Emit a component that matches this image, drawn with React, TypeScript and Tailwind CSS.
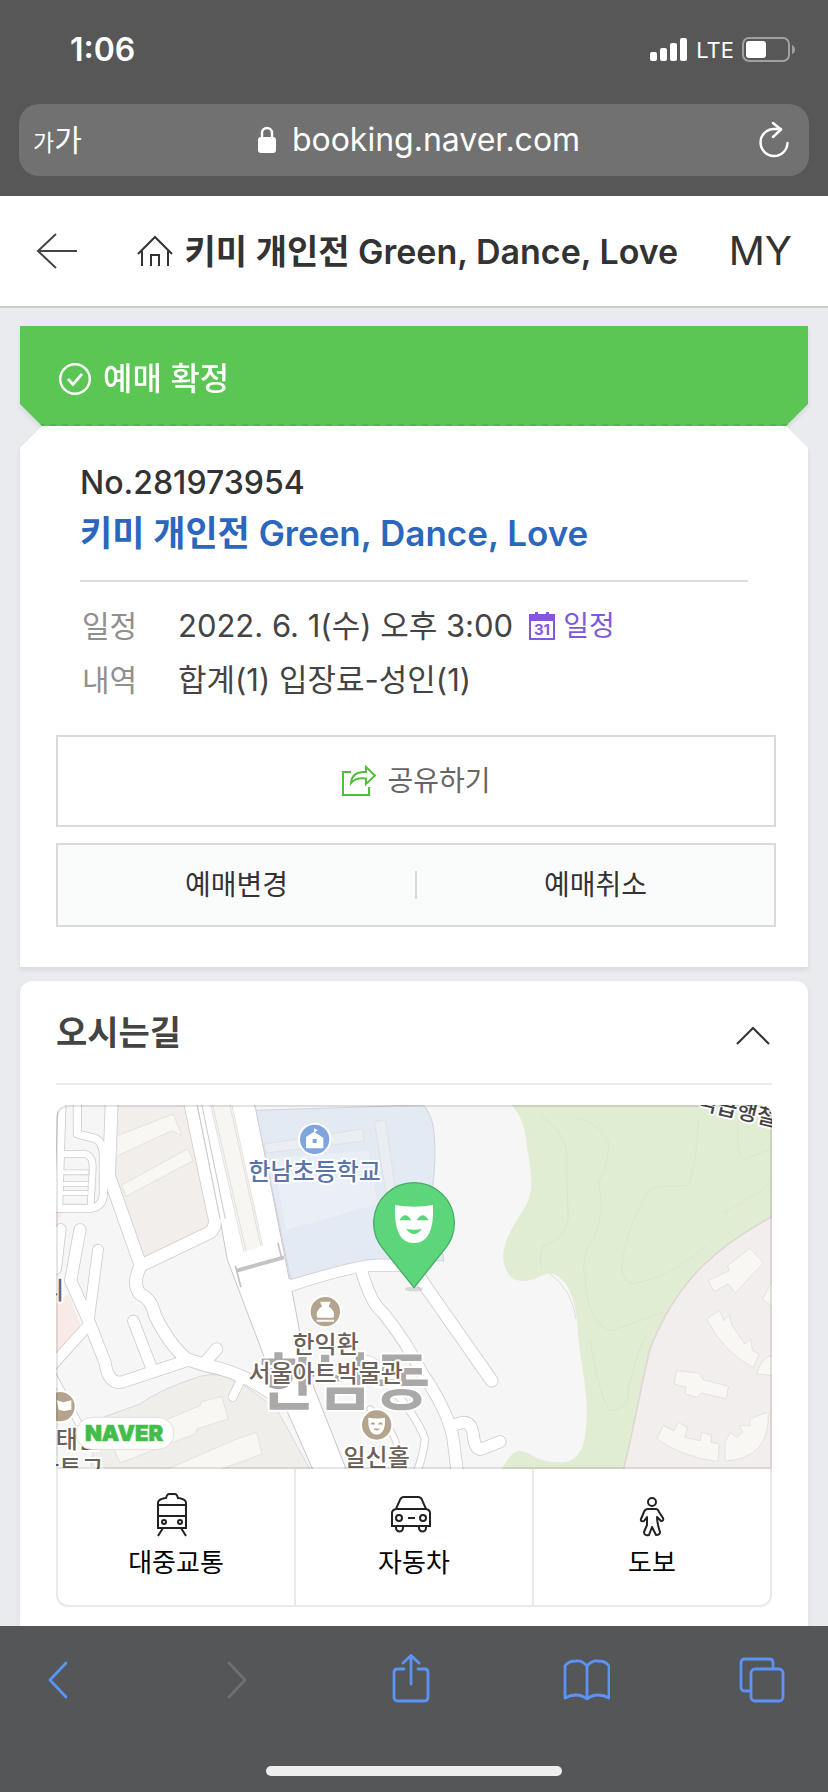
import type { ReactNode } from "react";

const roads = [
  { d: "M66 40 L56 350", w: 22 },
  { d: "M112 40 V135 L165 148 Q190 160 190 200 V320 Q185 355 150 358 H48", w: 22 },
  { d: "M70 195 H135 Q160 200 158 240 L152 350", w: 18 },
  { d: "M70 250 H140 M70 285 H140 M70 312 H140", w: 12 },
  { d: "M215 40 L207 260 L302 530 Q275 585 300 615 Q335 630 345 680 Q390 770 440 810 L500 830 Q600 845 720 930", w: 36 },
  { d: "M450 40 L525 395 Q525 425 500 435 L302 530", w: 36 },
  { d: "M62 420 L48 540", w: 30 },
  { d: "M120 422 L92 575 L148 700 L195 820 Q205 890 250 878 L440 815", w: 34 },
  { d: "M174 482 L144 710 L40 825", w: 30 },
  { d: "M280 696 L336 840", w: 32 },
  { d: "M530 780 L490 826", w: 34 },
  { d: "M606 866 L578 924", w: 24 },
  { d: "M40 860 L120 1010", w: 18 },
  { d: "M740 592 Q940 524 1010 528 H1090 Q1135 550 1155 590 L1355 875", w: 36 },
  { d: "M962 535 Q990 640 1028 670 Q1100 760 1145 850 Q1220 960 1238 1040 L1252 1150", w: 34 },
  { d: "M1232 1010 L1270 1000 Q1295 1000 1300 1040 Q1305 1085 1325 1080 L1380 1058", w: 34 },
  { d: "M960 810 Q1010 800 1040 880 Q1130 980 1155 1050 Q1150 1100 1130 1150", w: 20 },
  { d: "M990 960 Q1080 1020 1085 1150", w: 16 },
];

const buildings = [
  "M232 140 L400 75 L425 140 L395 125 L230 202Z",
  "M245 288 L443 180 L460 215 L258 322Z",
  "M214 1060 L480 950 L485 938 L545 922 L565 990 L470 1020 L465 1035 L240 1122Z",
  "M360 1150 L590 1050 L650 1030 L666 1095 L520 1150Z",
  "M2005 575 L2068 545 L2062 530 L2130 478 L2170 522 L2085 612 L2065 585 L2022 608Z",
  "M2000 690 L2038 664 L2052 695 L2068 678 L2076 710 L2115 765 L2132 750 L2138 785 L2158 795 L2140 836 Q2050 790 2000 690Z",
  "M2150 855 Q2165 800 2200 800 V860Z",
  "M2205 560 L2168 630 L2205 660Z",
  "M1910 845 L1978 852 L1990 872 L2066 892 L2058 930 L1985 912 L1970 925 L1935 915 L1938 895 L1902 885Z",
  "M1870 1010 L1902 1025 L1915 1000 L1942 1015 L1935 1045 L1980 1055 L1985 1030 L2015 1038 L2012 1060 L2038 1065 L2034 1118 Q1930 1105 1850 1050Z",
  "M2185 970 Q2190 1110 2055 1116 L2055 1060 L2070 1030 L2090 1045 L2108 1030 L2098 1010 L2130 1010 V988Z",
];

function Mask({ x, y, scale, hole }: { x: number; y: number; scale: number; hole: string }) {
  return (
    <g transform={`translate(${x} ${y}) scale(${scale})`}>
      <path d="M-57 -54 Q0 -44 57 -54 Q62 60 0 60 Q-62 60 -57 -54Z" fill="#fff" />
      <path d="M-44 -8 Q-26 -38 -8 -8Z M8 -8 Q26 -38 44 -8Z M-24 18 Q0 22 24 18 Q0 48 -24 18Z" fill={hole} />
    </g>
  );
}

function MapView() {
  return (
    <svg
      viewBox="48 48 2148 1092"
      preserveAspectRatio="xMidYMid slice"
      className="block h-[364px] w-full rounded-t-xl font-['Noto_Sans_CJK_KR',sans-serif]"
      role="img"
      aria-label="지도"
    >
      <rect x="0" y="0" width="2300" height="1200" fill="#f6f6f6" />
      <path d="M228 40 H432 L508 410 L315 505 L226 280Z" fill="#f1eeec" />
      <path d="M150 1150 L175 990 L300 945 Q360 900 480 862 Q540 845 600 880 L710 960 L815 1150Z" fill="#f0eeeb" stroke="#ddd9d5" strokeWidth="3" />
      <path d="M40 650 L85 615 L125 715 L40 795Z M40 368 H68 L50 405Z" fill="#f8ebe5" />
      <path d="M1415 48 C1450 90 1455 120 1465 200 C1480 280 1475 320 1455 355 C1420 410 1385 460 1390 515 C1400 560 1420 580 1460 575 C1500 570 1510 550 1540 555 C1590 575 1605 640 1612 700 C1615 800 1640 880 1640 960 C1640 1050 1630 1105 1580 1118 C1530 1125 1490 1110 1470 1095 C1430 1075 1415 1085 1380 1150 H2210 V40Z" fill="#e1edd2" />
      <path d="M1530 555 Q1595 600 1608 690" fill="none" stroke="#d2cdcd" strokeWidth="2" />
      <g fill="none" stroke="#dae6cc" strokeWidth="3">
        <path d="M1500 80 Q1580 130 1580 200 T1585 390 Q1570 460 1510 470 Q1495 500 1505 535" />
        <path d="M1600 85 Q1660 90 1705 155 Q1710 220 1675 280 Q1700 370 1660 450 Q1620 500 1635 560 Q1640 700 1710 725 Q1760 710 1870 670" />
        <path d="M1975 90 Q1970 220 1945 290 Q1840 290 1825 305 Q1780 380 1765 440 Q1720 570 1780 585 Q1900 560 2000 470" />
        <path d="M1650 750 Q1680 930 1710 965 Q1770 960 1765 900 Q1790 800 1815 740" />
        <path d="M2095 100 Q2085 210 2120 210 L2196 178 M2050 370 Q2130 330 2196 280" />
      </g>
      <path d="M2210 375 C2040 465 1910 570 1830 780 C1800 900 1780 1030 1748 1150 H2210Z" fill="#f1eeed" stroke="#dfd8d2" strokeWidth="5" />

      {/* casings first, so that junctions stay open */}
      <g fill="none" strokeLinecap="round" strokeLinejoin="round">
        {roads.map((r) => (
          <path key={r.d} d={r.d} stroke="#cfcdcd" strokeWidth={r.w + 5} />
        ))}
      </g>
      <path d="M470 40 L540 390 L562 512 L690 850 L822 1150 H922 L800 840 L756 605 L748 572 L648 62 L640 40Z" fill="#fff" stroke="#c9c6c6" strokeWidth="3" />
      <g fill="none" stroke="#fff" strokeLinecap="round" strokeLinejoin="round">
        {roads.map((r) => (
          <path key={r.d} d={r.d} strokeWidth={r.w} />
        ))}
      </g>
      <path d="M470 40 L540 390 M484 40 L556 390" fill="none" stroke="#cbc8c8" strokeWidth="3" />
      <path d="M510 40 H572 L668 470 L612 490Z" fill="#f7f6f3" />
      <path d="M510 40 L612 490 M516 40 L618 485 M568 40 L662 470 M574 40 L668 470" fill="none" stroke="#d8d3d0" strokeWidth="2" />
      <g fill="#f8f7f4" stroke="#e6e2dd" strokeWidth="3">
        {buildings.map((d) => (
          <path key={d} d={d} />
        ))}
      </g>
      <path d="M590 545 L732 505" stroke="#c5c2c4" strokeWidth="12" />
      <path d="M714 462 L726 512 M586 530 L603 595" stroke="#c5c2c4" strokeWidth="5" />

      <path d="M648 64 L1150 48 Q1178 80 1182 130 Q1190 210 1176 310 L1212 516 L1090 510 H1010 Q950 512 752 572Z" fill="#e4eaf3" stroke="#cfd2dc" strokeWidth="3" />
      <path d="M672 165 L968 120 L974 156 L680 192Z M1003 98 L1036 92 L1066 300 L1110 296 V322 L1040 326Z" fill="#eaeef2" stroke="#dde2e6" strokeWidth="3" />
      <path d="M700 206 L985 186 L1012 345 L738 424Z" fill="#e9eff5" />

      <g strokeLinejoin="round" stroke="#fff" strokeWidth="12" paintOrder="stroke" fontWeight="500" fontSize="72" textAnchor="middle">
        <text x="914" y="948" fontSize="186" fontWeight="700" fill="#aaa9a8">한남동</text>
        <circle cx="824" cy="151" r="44" fill="#7fa4de" />
        <text x="824" y="274" fill="#5975a8">한남초등학교</text>
        <circle cx="856" cy="668" r="44" fill="#b5a48d" />
        <text x="857" y="792" fill="#6c6258">한익환</text>
        <text x="857" y="880" fill="#6c6258">서울아트박물관</text>
        <circle cx="1010" cy="1008" r="44" fill="#b5a48d" />
        <text x="1010" y="1132" fill="#6c6258">일신홀</text>
        <circle cx="60" cy="953" r="44" fill="#b5a48d" />
        <text x="80" y="1078" fill="#6c6258">이태원</text>
        <text x="58" y="1166" fill="#6c6258">관광특구</text>
        <text x="39" y="630" fill="#5b6784">리</text>
        <text fontSize="66" fill="#444" textAnchor="start" transform="translate(1968 58) rotate(13)">역급행철도</text>
      </g>
      <path d="M798 178 V144 L822 128 V118 L834 124 L824 130 L850 146 V178Z" fill="#fff" />
      <rect x="818" y="150" width="12" height="12" fill="#7fa4de" />
      <path d="M840 638 H872 L866 652 Q888 668 880 686 H832 Q824 668 846 652Z M830 692 H882 V698 H830Z" fill="#fff" />
      <Mask x={1010} y={1010} scale={0.44} hole="#b5a48d" />
      <path d="M50 934 L70 940 L94 934 V962 L72 966 L56 962 L60 984" fill="#fff" />

      <rect x="108" y="985" width="294" height="96" rx="48" fill="#fff" stroke="#e2dfdd" strokeWidth="3" />
      <text x="252" y="1056" textAnchor="middle" fill="#43bd49" stroke="#43bd49" strokeWidth="2" fontSize="66" className="font-['Inter',sans-serif] font-black">NAVER</text>

      <ellipse cx="1122" cy="600" rx="28" ry="7" fill="#9aa39c" opacity=".35" />
      <path d="M1122 596 L1028 478 A121 121 0 1 1 1216 478Z" fill="#5dd67b" stroke="#44ad68" strokeWidth="4" />
      <Mask x={1122} y={402} scale={1} hole="#5dd67b" />

      <path d="M51 1137 V90 Q51 51 90 51 H2154 Q2193 51 2193 90 V1137Z" fill="none" stroke="#000" strokeOpacity=".1" strokeWidth="6" />
    </svg>
  );
}

function Way({ label, icon, className = "" }: { label: string; icon: ReactNode; className?: string }) {
  return (
    <button type="button" className={`flex flex-1 flex-col items-center pt-6 text-[26px] leading-9 text-black ${className}`}>
      {icon}
      <span className="mt-2">{label}</span>
    </button>
  );
}

function Row({ label, children }: { label: string; children: ReactNode }) {
  return (
    <div className="flex items-center">
      <dt className="w-24 text-[30px] text-[#8f8f8f]">{label}</dt>
      <dd className="flex items-center">{children}</dd>
    </div>
  );
}

export default function App() {
  return (
    <div className="flex min-h-screen flex-col bg-[#e9ebef] font-['Inter','Noto_Sans_CJK_KR',sans-serif] text-[#333]">
      <div className="bg-[#575757] pb-5 text-white">
        <div className="flex h-[104px] items-center justify-between pr-8 pb-1 pl-[70px]">
          <span className="text-[32px] font-semibold">1:06</span>
          <div className="flex items-center gap-2">
            <svg width="38" height="24" viewBox="0 0 38 24" fill="#fff">
              <rect y="14" width="7" height="9" rx="2" />
              <rect x="10" y="10" width="7" height="13" rx="2" />
              <rect x="20" y="5" width="7" height="18" rx="2" />
              <rect x="30" width="7" height="23" rx="2" />
            </svg>
            <span className="text-[22px]">LTE</span>
            <svg width="54" height="26" viewBox="0 0 54 26">
              <rect x="1" y="1" width="46" height="23" rx="6" fill="none" stroke="#a0a0a0" strokeWidth="2" />
              <rect x="4" y="4" width="20" height="17" rx="3" fill="#fff" />
              <path d="M50 8 Q53 9 53 12.5 T50 17Z" fill="#a0a0a0" />
            </svg>
          </div>
        </div>
        <div className="mx-[19px] flex h-[72px] items-center justify-between rounded-[20px] bg-[#717171] pr-5 pl-[14px]">
          <button type="button" aria-label="글자 크기" className="flex w-20 items-baseline">
            <span className="text-[23px]">가</span>
            <span className="text-[30px]">가</span>
          </button>
          <div className="flex items-center gap-4">
            <svg width="18" height="28" viewBox="0 0 18 28">
              <rect y="11" width="18" height="16" rx="3" fill="#fff" />
              <path d="M4 12 V7 a5 5 0 0 1 10 0 V12" fill="none" stroke="#fff" strokeWidth="2.4" />
            </svg>
            <span className="text-[32px]">booking.naver.com</span>
          </div>
          <button type="button" aria-label="새로고침" className="flex w-16 justify-end">
            <svg width="30" height="38" viewBox="0 0 30 38" fill="none" stroke="#fff" strokeWidth="2.4" strokeLinecap="round" strokeLinejoin="round">
              <path d="M28.5 22 A13.5 13.5 0 1 1 15 8 H22 M14 2 L22 8.5 L14 16" />
            </svg>
          </button>
        </div>
      </div>

      <header className="flex h-28 items-center justify-between border-b-2 border-[#cdced2] bg-white pr-9 pl-9">
        <button type="button" aria-label="뒤로">
          <svg width="42" height="36" viewBox="0 0 42 36" fill="none" stroke="#444" strokeWidth="2">
            <path d="M20 1 L2 18 L20 35 M2 18 H41" />
          </svg>
        </button>
        <div className="ml-2 flex items-center gap-3">
          <svg width="36" height="32" viewBox="0 0 36 32" fill="none" stroke="#333" strokeWidth="2">
            <path d="M1 19 L18 2 L35 19 M5 16 V31 M31 16 V31 M14 31 V20 H22 V31" />
          </svg>
          <h1 className="text-[34px] font-semibold whitespace-nowrap">키미 개인전 Green, Dance, Love</h1>
        </div>
        <a href="#my" className="text-[40px]">MY</a>
      </header>

      <main className="flex flex-1 flex-col px-5 pt-[18px]">
        <section className="drop-shadow-[0_3px_2px_rgba(0,0,0,0.08)]">
          <div className="flex h-[100px] flex-col bg-[#5bc653] text-white [clip-path:polygon(0_0,100%_0,100%_calc(100%-22px),calc(100%-22px)_100%,22px_100%,0_calc(100%-22px))]">
            <div className="flex flex-1 items-center gap-3 px-[39px] pt-2">
              <svg width="32" height="32" viewBox="0 0 32 32" fill="none" stroke="#fff">
                <circle cx="16" cy="16" r="14.8" strokeWidth="2.4" />
                <path d="M9 16 L14 21.5 L23 11" strokeWidth="2.8" />
              </svg>
              <strong className="text-[32px] font-medium">예매 확정</strong>
            </div>
            <div className="h-0.5 bg-[repeating-linear-gradient(90deg,transparent_0_6px,#52b34b_6px_12px)]" />
          </div>
          <div className="bg-white pt-[34px] pr-8 pb-10 pl-9 [clip-path:polygon(22px_0,calc(100%-22px)_0,100%_22px,100%_100%,0_100%,0_22px)]">
            <div className="mr-7 ml-6 border-b-2 border-[#dedede] pb-5">
              <p className="text-[32px] leading-[46px] font-medium">No.281973954</p>
              <h2 className="text-[35px] leading-[54px] font-semibold text-[#2b67bd]">키미 개인전 Green, Dance, Love</h2>
            </div>
            <dl className="mt-[17px] ml-[26px] text-[31px] leading-[54px] text-[#444]">
              <Row label="일정">
                2022. 6. 1(수) 오후 3:00
                <a href="#calendar" className="ml-4 flex items-center gap-2 text-[28px] text-[#7b5bdc]">
                  <svg width="26" height="28" viewBox="0 0 26 28">
                    <path d="M0 2 H6 V0 H9 V2 H17 V0 H20 V2 H26 V28 H0Z M2 9 V26 H24 V9Z" fill="#8557de" fillRule="evenodd" />
                    <text x="13" y="23" textAnchor="middle" fontSize="15" fontWeight="700" fill="#8557de">31</text>
                  </svg>
                  일정
                </a>
              </Row>
              <Row label="내역">합계(1) 입장료-성인(1)</Row>
            </dl>
            <button type="button" className="mt-7 flex h-[92px] w-full items-center justify-center gap-2.5 border-2 border-[#d9dbdb] text-[28px] text-[#666]">
              <svg width="36" height="32" viewBox="0 0 36 32" fill="none" stroke="#53bd3e" strokeWidth="2">
                <path d="M10 7 H2 V30 H28 V22" />
                <path d="M10 18 Q11 6 25 7 V2 L34 10.500 L25 19 V13.500 Q15 12 10 18Z" />
              </svg>
              공유하기
            </button>
            <div className="mt-4 flex h-[84px] items-center border-2 border-[#d9dbdb] bg-[#fafcfb] text-[28px]">
              <button type="button" className="flex-1">예매변경</button>
              <span className="h-7 w-0.5 bg-[#d9dbdb]" />
              <button type="button" className="flex-1">예매취소</button>
            </div>
          </div>
        </section>

        <section className="mt-[14px] flex-1 rounded-t-xl bg-white px-9 pb-[18px] shadow-[0_2px_6px_rgba(0,0,0,0.06)]">
          <div className="flex h-[104px] items-center justify-between border-b-2 border-[#ebebeb]">
            <h2 className="text-[34px] font-bold text-[#444]">오시는길</h2>
            <button type="button" aria-label="접기">
              <svg width="36" height="26" viewBox="0 0 36 26" fill="none" stroke="#333" strokeWidth="2">
                <path d="M1 25 L17 9 L33 25" />
              </svg>
            </button>
          </div>
          <div className="mt-5">
            <MapView />
            <div className="flex h-[138px] rounded-b-xl border-x-2 border-b-2 border-[#e9e9e9]">
              <Way
                label="대중교통"
                icon={
                  <svg width="38" height="44" viewBox="0 0 38 44" fill="none" stroke="#222" strokeWidth="2">
                    <path d="M1 35 V10 Q1 6 9 5 Q10 1 12 1 H18 Q20 1 21 5 Q29 6 29 10 V35Z M1 12 H29 M1 23 H29 M6 35 L1 43 M24 35 L29 43" />
                    <circle cx="7" cy="29" r="2" />
                    <circle cx="23" cy="29" r="2" />
                  </svg>
                }
              />
              <Way
                label="자동차"
                className="border-x-2 border-[#e9e9e9]"
                icon={
                  <svg width="48" height="44" viewBox="0 0 48 44" fill="none" stroke="#222" strokeWidth="2">
                    <path d="M2 33 V20 Q2 17 6 16 L10 7 Q11 4 14 4 H28 Q31 4 32 7 L36 16 Q40 17 40 20 V33Z M6 16 H36 M18 25 H25" />
                    <circle cx="9" cy="25" r="3" />
                    <circle cx="33" cy="25" r="3" />
                    <path d="M6 33 V35 A3.300 3.300 0 0 0 13 35 V33 M29 33 V35 A3.300 3.300 0 0 0 36 35 V33" />
                  </svg>
                }
              />
              <Way
                label="도보"
                icon={
                  <svg width="26" height="44" viewBox="0 0 26 44" fill="none" stroke="#222" strokeWidth="2" strokeLinejoin="round">
                    <circle cx="13" cy="9" r="4" />
                    <path d="M9 16 H17 Q19 16 20 19 L24 25 Q25 28 22 28 L18 24 Q18 30 21 39 Q21 42 17 42 L13 34 L10 42 Q5 43 5 39 L8 32 V24 L5 28 Q1 29 2 26 L5 19 Q6 16 9 16Z" />
                  </svg>
                }
              />
            </div>
          </div>
        </section>
      </main>

      <footer className="bg-[#555657] pb-4 text-[#5b93f7]">
        <nav className="flex h-[140px] items-start justify-between pt-7 pr-[42px] pl-[34px]">
          <button type="button" aria-label="이전">
            <svg width="48" height="50" viewBox="0 0 48 50" fill="none" stroke="currentColor" strokeWidth="2.800" strokeLinecap="round" strokeLinejoin="round">
              <path d="M32 9 L16 26 L32 43" />
            </svg>
          </button>
          <button type="button" aria-label="다음" disabled className="text-[#6e6f70]">
            <svg width="48" height="50" viewBox="0 0 48 50" fill="none" stroke="currentColor" strokeWidth="2.800" strokeLinecap="round" strokeLinejoin="round">
              <path d="M19 9 L35 26 L19 43" />
            </svg>
          </button>
          <button type="button" aria-label="공유">
            <svg width="48" height="50" viewBox="0 0 48 50" fill="none" stroke="currentColor" strokeWidth="2.800" strokeLinecap="round">
              <path d="M18 15 H11 Q8 15 8 19 V43 Q8 47 12 47 H38 Q42 47 42 43 V19 Q42 15 39 15 H32 M25 30 V2 M17 9 L25 1.500 L33 9" />
            </svg>
          </button>
          <button type="button" aria-label="책갈피">
            <svg width="48" height="50" viewBox="0 0 48 50" fill="none" stroke="currentColor" strokeWidth="2.800" strokeLinejoin="round">
              <path d="M25 12 Q20 6 14 7 Q6 7 3 12 V44 Q8 41 14 41 Q20 41 25 45 Q30 41 36 41 Q42 41 47 44 V12 Q44 7 36 7 Q30 6 25 12Z M25 12 V45" />
            </svg>
          </button>
          <button type="button" aria-label="탭">
            <svg width="48" height="50" viewBox="0 0 48 50" fill="none" stroke="currentColor" strokeWidth="2.800">
              <path d="M35 15 V9 Q35 5 31 5 H7 Q3 5 3 9 V33 Q3 37 7 37 H13" />
              <rect x="13" y="15" width="32" height="32" rx="4" />
            </svg>
          </button>
        </nav>
        <div className="mx-auto h-[10px] w-[296px] rounded-full bg-[#eee]" />
      </footer>
    </div>
  );
}
